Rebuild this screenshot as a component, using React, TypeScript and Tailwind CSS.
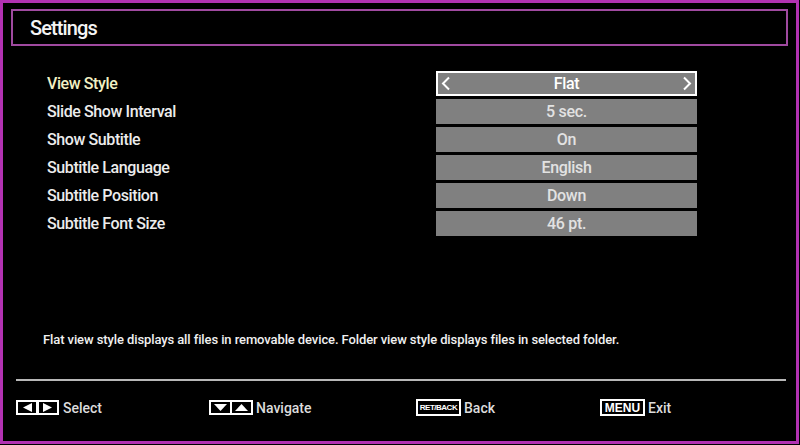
import React from "react";

const rows = [
  { label: "View Style", value: "Flat", selected: true },
  { label: "Slide Show Interval", value: "5 sec." },
  { label: "Show Subtitle", value: "On" },
  { label: "Subtitle Language", value: "English" },
  { label: "Subtitle Position", value: "Down" },
  { label: "Subtitle Font Size", value: "46 pt." },
];

const font = { fontFamily: 'Roboto, "Liberation Sans", sans-serif' };

function SelectIcon() {
  return (
    <svg width="45" height="17" viewBox="0 0 45 17">
      <rect x="1" y="1" width="43" height="15" fill="#fff" />
      <rect x="3" y="3" width="18" height="11" fill="#000" />
      <rect x="24" y="3" width="18" height="11" fill="#000" />
      <polygon points="17,4 17,13 8,8.5" fill="#fff" />
      <polygon points="28,4 28,13 37,8.5" fill="#fff" />
    </svg>
  );
}

function NavIcon() {
  return (
    <svg width="46" height="17" viewBox="0 0 46 17">
      <rect x="1" y="1" width="44" height="15" fill="#fff" />
      <rect x="3" y="3" width="19" height="11" fill="#000" />
      <rect x="24" y="3" width="19" height="11" fill="#000" />
      <polygon points="6,5 19,5 12.5,12" fill="#fff" />
      <polygon points="27,12 40,12 33.5,5" fill="#fff" />
    </svg>
  );
}

function Chevron({ dir }: { dir: "l" | "r" }) {
  return (
    <svg width="10" height="15" viewBox="0 0 10 15">
      <polyline
        points={dir === "l" ? "8,1.5 2,7.5 8,13.5" : "2,1.5 8,7.5 2,13.5"}
        fill="none"
        stroke="#fff"
        strokeWidth="2"
      />
    </svg>
  );
}

export default function App() {
  return (
    <div className="w-[800px] h-[445px] bg-black overflow-hidden" style={font}>
      <div className="w-[799px] h-[444px] border-[3px] border-[#b232b2] flex flex-col">
        <div className="ml-[8px] mt-[6px] w-[777px] h-[37px] border-2 border-[#a04aa0] flex items-center pl-[17px]">
          <span className="text-[20px] font-medium tracking-[-0.9px] text-[#f4f4f4] leading-none">Settings</span>
        </div>
        <div className="mt-[25px] flex flex-col gap-[3px]">
          {rows.map((r) => (
            <div key={r.label} className="flex items-center h-[25px]">
              <div
                className={
                  "ml-[44px] w-[389px] text-[16px] font-medium tracking-[-0.4px] leading-none " +
                  (r.selected ? "text-[#f2f0c4]" : "text-[#ececec]")
                }
              >
                {r.label}
              </div>
              <div
                className={
                  "w-[261px] h-[25px] bg-[#808080] flex items-center justify-between px-[3px] text-[16px] font-medium tracking-[-0.3px] leading-none " +
                  (r.selected ? "border-2 border-white text-white" : "text-[#e2e2e2]")
                }
              >
                <span className="w-[10px] flex">{r.selected ? <Chevron dir="l" /> : null}</span>
                <span>{r.value}</span>
                <span className="w-[10px] flex">{r.selected ? <Chevron dir="r" /> : null}</span>
              </div>
            </div>
          ))}
        </div>
        <div className="mt-[97px] ml-[40px] text-[13px] font-medium tracking-[-0.1px] text-[#f0f0f0] leading-none">
          Flat view style displays all files in removable device. Folder view style displays files in selected folder.
        </div>
        <div className="mt-[33px] ml-[13px] w-[770px] h-[2px] bg-[#b8b8b8]" />
        <div className="mt-[18px] flex items-center text-[14px] font-medium text-[#dcdcdc] leading-none">
          <div className="ml-[12px] w-[193px] flex items-center gap-[3px]">
            <SelectIcon />
            <span>Select</span>
          </div>
          <div className="w-[208px] flex items-center gap-[2px]">
            <NavIcon />
            <span>Navigate</span>
          </div>
          <div className="w-[184px] flex items-center gap-[3px]">
            <span className="h-[17px] w-[45px] border-2 border-white flex items-center justify-center text-[8px] tracking-[-0.5px] text-white font-bold" style={{ fontFamily: '"Liberation Sans", sans-serif' }}>
              RET/BACK
            </span>
            <span>Back</span>
          </div>
          <div className="flex items-center gap-[3px]">
            <span className="h-[17px] w-[45px] border-2 border-white flex items-center justify-center text-[12px] text-white font-bold" style={{ fontFamily: '"Liberation Sans", sans-serif' }}>
              MENU
            </span>
            <span>Exit</span>
          </div>
        </div>
      </div>
    </div>
  );
}
